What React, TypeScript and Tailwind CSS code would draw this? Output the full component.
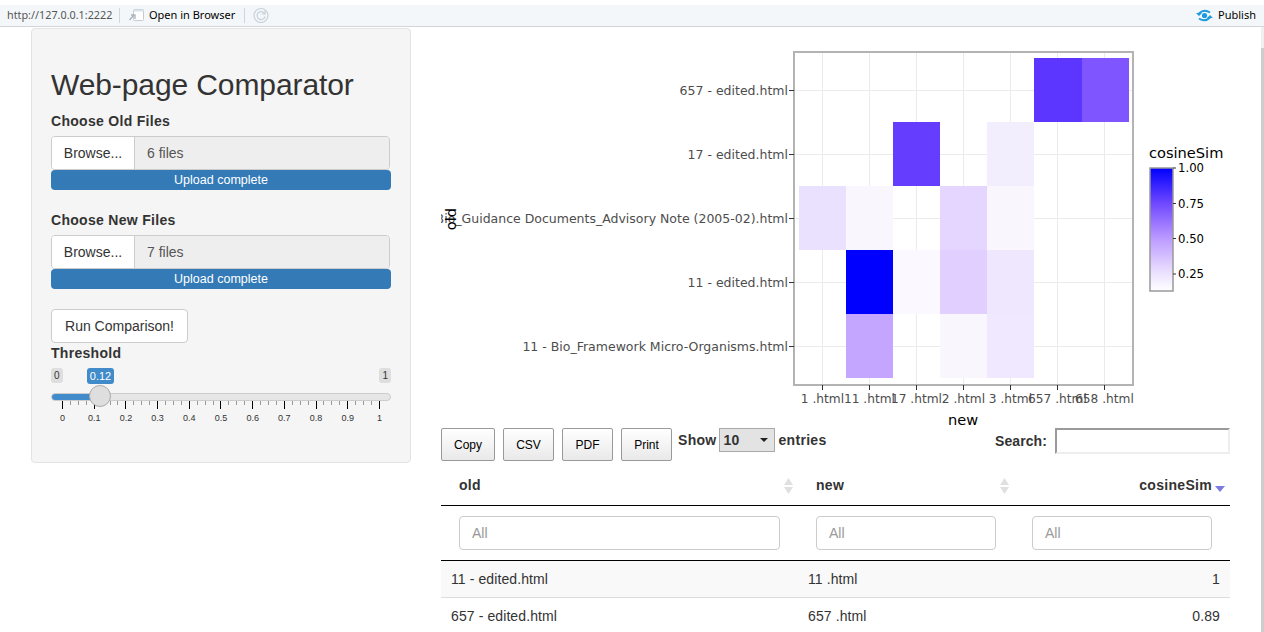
import React from "react";

const xLabels = ["1 .html", "11 .html", "17 .html", "2 .html", "3 .html", "657 .html", "658 .html"];
const yLabels = [
  "657 - edited.html",
  "17 - edited.html",
  "11 - Bio_Guidance Documents_Advisory Note (2005-02).html",
  "11 - edited.html",
  "11 - Bio_Framework Micro-Organisms.html",
];

// col, row, colour
const tiles: [number, number, string][] = [
  [5, 0, "#5c35ff"],
  [6, 0, "#7e55ff"],
  [2, 1, "#653dff"],
  [4, 1, "#f3eefe"],
  [0, 2, "#eae1fe"],
  [1, 2, "#f9f6fe"],
  [3, 2, "#e4d6ff"],
  [4, 2, "#f9f6fe"],
  [1, 3, "#0000ff"],
  [2, 3, "#fbf9ff"],
  [3, 3, "#e0cfff"],
  [4, 3, "#efe7fe"],
  [1, 4, "#c4a5ff"],
  [3, 4, "#f9f6fe"],
  [4, 4, "#f0e8fe"],
];

const plotFont = "DejaVu Sans, Verdana, sans-serif";

const Heatmap = () => (
  <svg width="789" height="398" viewBox="441 30 789 398" className="block">
    <defs>
      <linearGradient id="legendGrad" x1="0" y1="0" x2="0" y2="1">
        <stop offset="0" stopColor="#0000ff" />
        <stop offset="0.29" stopColor="#7048ff" />
        <stop offset="0.58" stopColor="#bd9cff" />
        <stop offset="0.86" stopColor="#ece3fe" />
        <stop offset="1" stopColor="#ffffff" />
      </linearGradient>
    </defs>
    {xLabels.map((_, i) => (
      <line key={i} x1={822.5 + i * 47} x2={822.5 + i * 47} y1="53" y2="384" stroke="#ebebeb" strokeWidth="1" />
    ))}
    {yLabels.map((_, i) => (
      <line key={i} x1="795" x2="1132" y1={90.5 + i * 64} y2={90.5 + i * 64} stroke="#ebebeb" strokeWidth="1" />
    ))}
    {tiles.map(([c, r, fill], i) => (
      <rect key={i} x={799 + c * 47 + (c === 6 ? 1 : 0)} y={58 + r * 64} width={c === 5 ? 48 : 47} height="64" fill={fill} />
    ))}
    <rect x="794" y="52" width="339" height="333" fill="none" stroke="#b3b3b3" strokeWidth="2" />
    {xLabels.map((label, i) => (
      <g key={label}>
        <line x1={822.5 + i * 47} x2={822.5 + i * 47} y1="385" y2="390" stroke="#333" strokeWidth="1" />
        <text x={822.5 + i * 47} y="403" textAnchor="middle" fontSize="12.2" fill="#4d4d4d" fontFamily={plotFont}>
          {label}
        </text>
      </g>
    ))}
    {yLabels.map((label, i) => (
      <g key={label}>
        <line x1="789" x2="794" y1={90.5 + i * 64} y2={90.5 + i * 64} stroke="#333" strokeWidth="1" />
        <text x="788" y={94.5 + i * 64} textAnchor="end" fontSize="12.5" fill="#4d4d4d" fontFamily={plotFont}>
          {label}
        </text>
      </g>
    ))}
    <text x="963" y="425" textAnchor="middle" fontSize="14.6" fill="#000" fontFamily={plotFont}>
      new
    </text>
    <text x="456" y="219" textAnchor="middle" fontSize="14.6" fill="#000" fontFamily={plotFont} transform="rotate(-90 456 219)">
      old
    </text>
    <text x="1149" y="158" fontSize="14.6" fill="#000" fontFamily={plotFont}>
      cosineSim
    </text>
    <rect x="1150" y="168" width="23" height="123" fill="url(#legendGrad)" stroke="#999" strokeWidth="1.5" />
    {[
      ["1.00", 168],
      ["0.75", 203.5],
      ["0.50", 238.5],
      ["0.25", 274],
    ].map(([label, y]) => (
      <g key={label}>
        <line x1="1173" x2="1176" y1={y} y2={y} stroke="#333" strokeWidth="1" />
        <text x="1178" y={Number(y) + 4} fontSize="11.7" fill="#000" fontFamily={plotFont}>
          {label}
        </text>
      </g>
    ))}
  </svg>
);

const FileInput = ({ label, files }: { label: string; files: string }) => (
  <div>
    <div className="text-[14px] leading-[20px] font-bold tracking-[0.3px] text-[#333] mb-[5px]">{label}</div>
    <div className="flex h-[34px] w-[339px] border border-[#ccc] rounded-[4px] overflow-hidden text-[14px]">
      <div className="w-[83px] bg-white border-r border-[#ccc] flex items-center justify-center text-[#333]">Browse...</div>
      <div className="flex-1 bg-[#eee] flex items-center pl-[12px] text-[#555]">{files}</div>
    </div>
    <div className="h-[20px] bg-[#337ab7] rounded-[4px] text-white text-[12.5px] leading-[20px] text-center">Upload complete</div>
  </div>
);

const Slider = () => {
  const ticks = Array.from({ length: 41 }, (_, i) => i);
  const labels = ["0", "0.1", "0.2", "0.3", "0.4", "0.5", "0.6", "0.7", "0.8", "0.9", "1"];
  return (
    <div className="relative w-[340px] h-[56px] mt-[5px]">
      <div className="flex justify-between items-start text-[10px] leading-[15px]">
        <span className="bg-[#dedede] rounded-[3px] px-[3px] text-[#333]">0</span>
        <span className="bg-[#dedede] rounded-[3px] px-[3px] text-[#333]">1</span>
      </div>
      <span className="absolute left-[36px] top-0 h-[16px] bg-[#428bca] rounded-[3px] text-white text-[11px] leading-[16px] w-[27px] text-center">
        0.12
      </span>
      <div className="mt-[10px] h-[8px] rounded-full bg-[#e6e6e6] border border-[#ccc] overflow-hidden">
        <div className="h-full w-[49px] bg-[#428bca]" />
      </div>
      <div className="absolute left-[38px] top-[17px] w-[22px] h-[22px] rounded-full bg-[#dedede] border border-[#aaa]" />
      <div className="flex justify-between items-start mx-[11px]">
        {ticks.map((i) => (
          <div key={i} className={i % 4 === 0 ? "w-px h-[8px] bg-black" : "w-px h-[4px] bg-[#999]"} />
        ))}
      </div>
      <div className="flex justify-between mx-[11px] mt-[3px] text-[9px] leading-[12px] text-[#333]">
        {labels.map((l) => (
          <div key={l} className="w-px flex justify-center whitespace-nowrap">
            {l}
          </div>
        ))}
      </div>
    </div>
  );
};

const SortArrows = () => (
  <svg width="9" height="16" viewBox="0 0 9 16">
    <path d="M4.5 0 L9 7 H0 Z" fill="#e0e0e0" />
    <path d="M4.5 16 L9 9 H0 Z" fill="#e0e0e0" />
  </svg>
);

const DtButton = ({ children }: { children: React.ReactNode }) => (
  <div className="h-[33px] flex items-center justify-center border border-[#999] rounded-[2px] bg-gradient-to-b from-white to-[#e9e9e9] text-[12px] text-black">
    {children}
  </div>
);

const FilterBox = ({ className }: { className: string }) => (
  <div className={"h-[34px] border border-[#ccc] rounded-[4px] bg-white text-[14px] text-[#999] flex items-center pl-[12px] pt-[2px] " + className}>All</div>
);

const rows = [
  { old: "11 - edited.html", next: "11 .html", sim: "1", rowClass: "bg-[#f9f9f9] border-b border-[#ddd] h-[37px]" },
  { old: "657 - edited.html", next: "657 .html", sim: "0.89", rowClass: "h-[37px]" },
];

export default function App() {
  return (
    <div className="relative h-[632px] w-[1264px] overflow-hidden bg-white text-[14px] text-[#333]" style={{ fontFamily: '"Liberation Sans", Arial, sans-serif' }}>
      <div className="mt-[5px] h-[22px] bg-[#f4f7f9] border-b border-[#d3d6d8] flex items-center text-[11px] pb-px" style={{ fontFamily: '"Noto Sans", Tahoma, sans-serif' }}>
        <span className="ml-[7px] w-[105px] text-[10.8px] text-[#555] whitespace-nowrap">http://127.0.0.1:2222</span>
        <div className="ml-[7px] h-[15px] w-px bg-[#d3d6d8]" />
        <svg className="ml-[8px]" width="16" height="13" viewBox="0 0 16 13">
          <rect x="5.5" y="0.5" width="10" height="11" rx="1" fill="#fff" stroke="#c3ccd3" />
          <path d="M5.5 0.5 h10 v2 h-10 Z" fill="#dbe3e9" />
          <path d="M6 6 L1.5 11 M3 6 H7 V10" stroke="#aab4bc" strokeWidth="1.3" fill="none" />
        </svg>
        <span className="ml-[5px] text-black whitespace-nowrap">Open in Browser</span>
        <div className="ml-[9px] h-[15px] w-px bg-[#d3d6d8]" />
        <svg className="ml-[8px]" width="16" height="16" viewBox="0 0 16 16" fill="none" stroke="#c7d1da" strokeWidth="1.2">
          <circle cx="8" cy="8.5" r="7" />
          <path d="M11.5 6.5 A4 4 0 1 0 12 9.5 M12 3.5 V7 H8.5" />
        </svg>
        <div className="flex-1" />
        <svg width="17" height="13" viewBox="0 0 17 13" fill="none" stroke="#1c9ade" strokeWidth="2">
          <circle cx="8.5" cy="6.5" r="2.6" fill="#1c9ade" stroke="none" />
          <path d="M3 4.5 Q8 -0.5 14 3.5" />
          <path d="M14 8.5 Q9 13.5 3 9.5" />
          <path d="M0 4 H6 L3 7 Z M11 9 H17 L14 6 Z" fill="#1c9ade" stroke="none" />
        </svg>
        <span className="ml-[5px] mr-[8px] text-black">Publish</span>
      </div>

      <div className="flex items-start">
        <div className="ml-[31px] mt-px w-[380px] h-[435px] bg-[#f5f5f5] border border-[#e3e3e3] rounded-[4px] pl-[19px] pr-[19px] pt-[39px]">
          <div className="text-[30px] leading-[33px] tracking-[-0.1px] text-[#333] mb-[10px] whitespace-nowrap">Web-page Comparator</div>
          <FileInput label="Choose Old Files" files="6 files" />
          <div className="h-[20px]" />
          <FileInput label="Choose New Files" files="7 files" />
          <div className="mt-[20px] w-[137px] h-[34px] border border-[#ccc] rounded-[4px] bg-white flex items-center justify-center">Run Comparison!</div>
          <div className="font-bold leading-[20px] tracking-[0.3px]">Threshold</div>
          <Slider />
        </div>

        <div className="ml-[30px] w-[789px] mt-[3px]">
          <Heatmap />
          <div className="flex items-start">
            <div className="flex gap-[8px]">
              <div className="w-[54px]"><DtButton>Copy</DtButton></div>
              <div className="w-[51px]"><DtButton>CSV</DtButton></div>
              <div className="w-[51px]"><DtButton>PDF</DtButton></div>
              <div className="w-[51px]"><DtButton>Print</DtButton></div>
            </div>
            <div className="ml-[6px] flex items-center h-[24px] font-bold tracking-[0.3px]">
              <span>Show</span>
              <div className="ml-[2px] w-[56px] h-[24px] bg-[#e3e3e3] border border-[#aaa] flex items-center justify-between pl-[4px] pr-[6px]">
                <span>10</span>
                <svg width="8" height="4" viewBox="0 0 8 4">
                  <path d="M0 0 H8 L4 4 Z" fill="#222" />
                </svg>
              </div>
              <span className="ml-[4px]">entries</span>
            </div>
            <div className="flex-1" />
            <div className="flex items-center h-[26px] font-bold">
              <span className="mr-[8px] tracking-[0.1px]">Search:</span>
              <div className="w-[175px] h-[26px] bg-white border-2 border-t-[#9a9a9a] border-l-[#9a9a9a] border-r-[#eee] border-b-[#eee]" />
            </div>
          </div>

          <div className="grid grid-cols-[357px_216px_216px] border-b border-black h-[45px] items-center font-bold tracking-[0.3px] pt-[5px]">
            <div className="flex items-center justify-between pl-[18px] pr-[5px]">
              <span>old</span>
              <SortArrows />
            </div>
            <div className="flex items-center justify-between pl-[18px] pr-[5px]">
              <span>new</span>
              <SortArrows />
            </div>
            <div className="flex items-center justify-end pr-[5px]">
              <span>cosineSim</span>
              <svg className="ml-[3px] mt-[6px]" width="10" height="6" viewBox="0 0 10 6">
                <path d="M0 0 H10 L5 6 Z" fill="#7b7be0" />
              </svg>
            </div>
          </div>
          <div className="grid grid-cols-[357px_216px_216px] border-b border-black h-[55px] items-center pb-px">
            <FilterBox className="ml-[18px] w-[321px]" />
            <FilterBox className="ml-[18px] w-[180px]" />
            <FilterBox className="ml-[18px] w-[180px]" />
          </div>
          {rows.map((row) => (
            <div key={row.old} className={"grid grid-cols-[357px_216px_216px] items-center tracking-[0.1px] " + row.rowClass}>
              <div className="pl-[10px]">{row.old}</div>
              <div className="pl-[10px]">{row.next}</div>
              <div className="pr-[10px] text-right">{row.sim}</div>
            </div>
          ))}
        </div>
      </div>

      <div className="absolute right-0 top-[27px] bottom-0 w-[3px] bg-[#f0f0f0]">
        <div className="mt-[21px] h-[584px] bg-[#cdcdcd]" />
      </div>
    </div>
  );
}
